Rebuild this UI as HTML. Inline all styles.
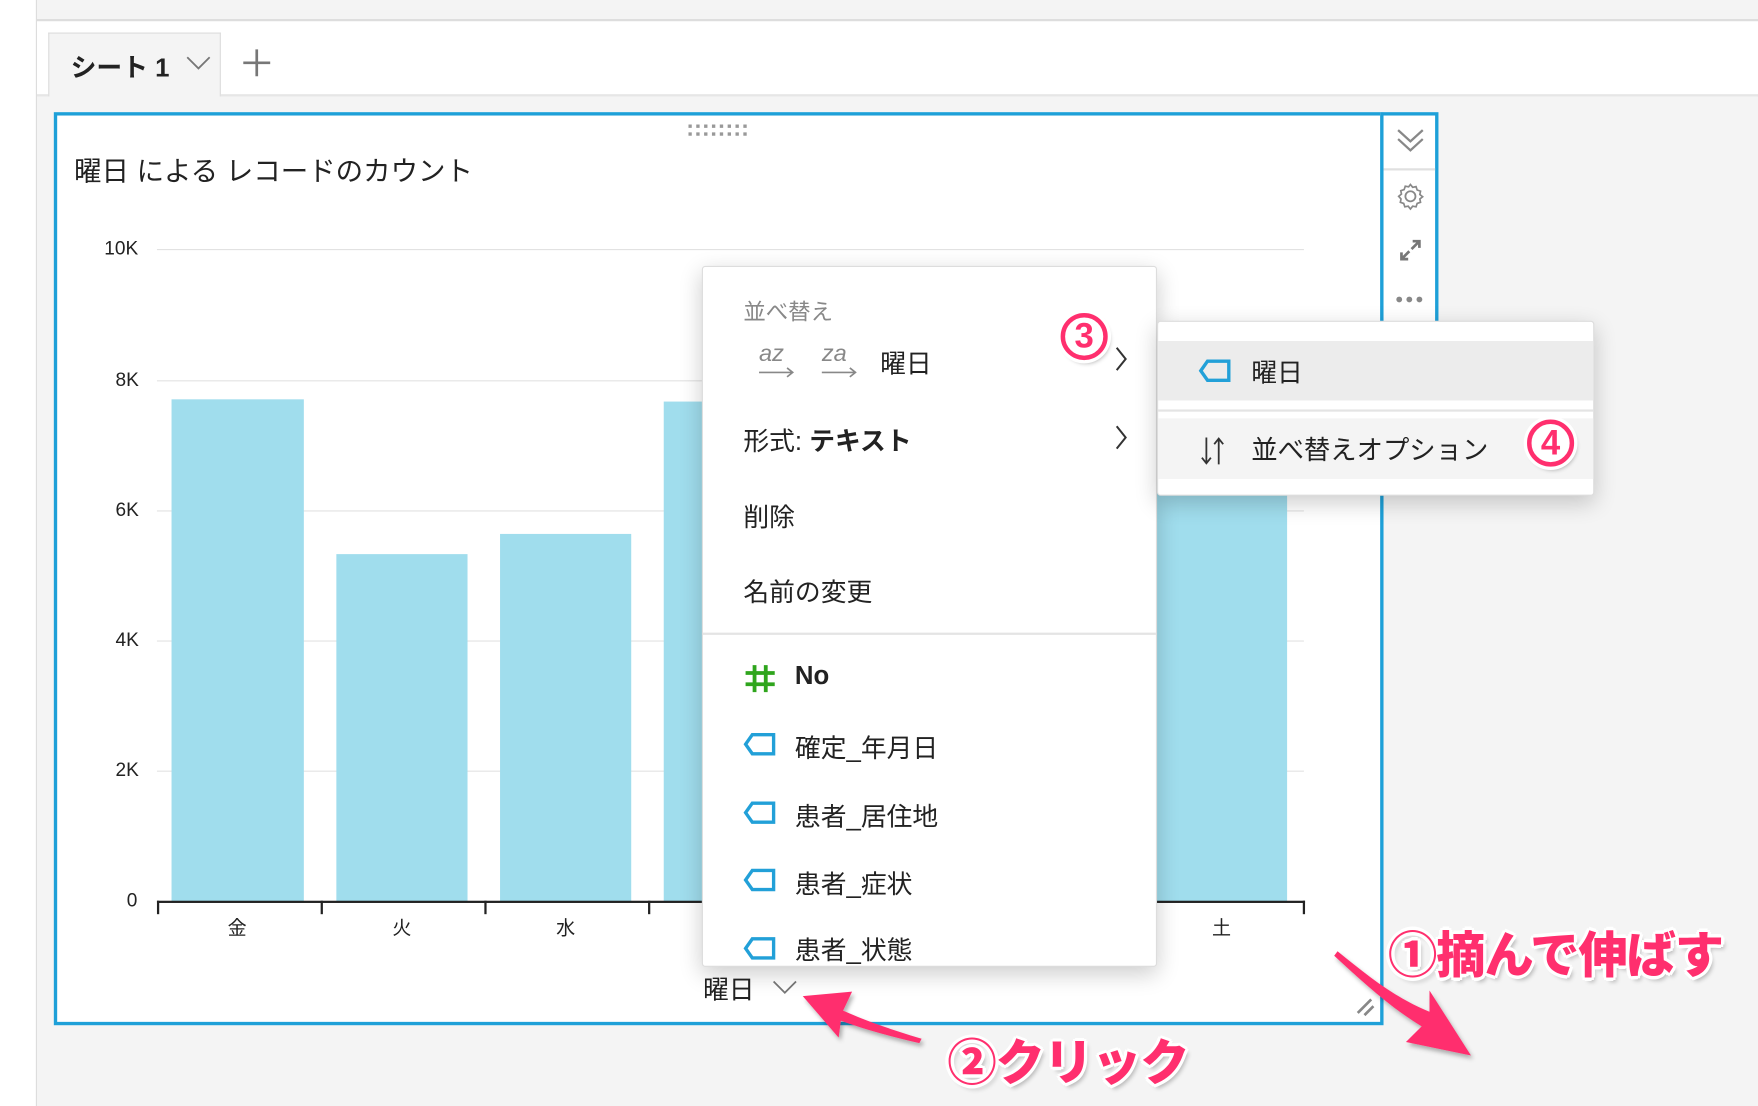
<!DOCTYPE html>
<html><head><meta charset="utf-8"><style>
*{margin:0;padding:0;box-sizing:border-box}
html,body{width:1758px;height:1106px;overflow:hidden;background:#f4f4f4}
#w{position:absolute;left:0;top:0;width:1568px;height:986px;transform:scale(1.12117,1.1217);transform-origin:0 0;font-family:"Liberation Sans","Noto Sans CJK JP",sans-serif;color:#222;background:#f4f4f4}
.a{position:absolute}
.t{position:absolute;white-space:nowrap}
.pk{color:#ff2f6e;font-weight:900;text-shadow:0 0 3px #fff,2px 2px 0 #fff,-2px -2px 0 #fff,2px -2px 0 #fff,-2px 2px 0 #fff,3px 0 0 #fff,-3px 0 0 #fff,0 3px 0 #fff,0 -3px 0 #fff,3px 4px 4px rgba(0,0,0,.25)}
.circ{position:absolute;border-radius:50%;background:#fff;border:4px solid #ff2f6e;box-shadow:0 0 0 3px #fff,2px 3px 4px rgba(0,0,0,.3);color:#ff2f6e;font-weight:900;text-align:center;font-family:"Liberation Sans",sans-serif}
.m{font-size:23px}
</style></head><body><div id="w">
<div class="a" style="left:0;top:0;width:32px;height:986px;background:#fff"></div>
<div class="a" style="left:32px;top:0;width:1px;height:986px;background:#ddd"></div>
<div class="a" style="left:33px;top:17px;width:1535px;height:2px;background:#ddd"></div>
<div class="a" style="left:33px;top:19px;width:1535px;height:65px;background:#fff"></div>
<div class="a" style="left:33px;top:84px;width:1535px;height:2px;background:#e6e6e6"></div>
<div class="a" style="left:43px;top:29px;width:154px;height:57px;background:#f4f4f4;border:1px solid #ddd;border-bottom:none"></div>
<div class="t" style="left:63px;top:41px;font-size:23px;font-weight:bold;color:#222">シート 1</div>
<svg class="a" style="left:165px;top:48px" width="24" height="16"><path d="M2 3 L12 13 L22 3" fill="none" stroke="#777" stroke-width="1.6"/></svg>
<svg class="a" style="left:215px;top:42px" width="28" height="28"><path d="M14 2V26M2 14H26" stroke="#777" stroke-width="2.4"/></svg>

<div class="a" style="left:48px;top:100px;width:1186px;height:814px;background:#fff;border:3px solid #1ea0d8"></div>
<div class="a" style="left:1231px;top:100px;width:52px;height:190px;background:#fff;border:3px solid #1ea0d8"></div>
<div class="a" style="left:1234px;top:150px;width:46px;height:2px;background:#e0e0e0"></div>
<svg class="a" style="left:1244px;top:112px" width="28" height="26"><path d="M3 4 L14 14 L25 4 M3 12 L14 22 L25 12" fill="none" stroke="#888" stroke-width="2"/></svg>
<svg class="a" style="left:1245px;top:162px" width="26" height="26"><circle cx="13" cy="13" r="4.5" fill="none" stroke="#888" stroke-width="1.6"/><path d="M13 2.5l2 2.5 3-.6 1 3 3 1-.6 3 2.5 2-2.5 2 .6 3-3 1-1 3-3-.6-2 2.5-2-2.5-3 .6-1-3-3-1 .6-3L2.5 13 5 11l-.6-3 3-1 1-3 3 .6z" fill="none" stroke="#888" stroke-width="1.5"/></svg>
<svg class="a" style="left:1247px;top:212px" width="22" height="22"><path d="M12 10 L19 3 M13 3H19V9 M10 12 L3 19 M3 13V19H9" fill="none" stroke="#777" stroke-width="2.4"/></svg>
<svg class="a" style="left:1244px;top:262px" width="28" height="10"><circle cx="4" cy="5" r="2.6" fill="#888"/><circle cx="13" cy="5" r="2.6" fill="#888"/><circle cx="22" cy="5" r="2.6" fill="#888"/></svg>
<svg class="a" style="left:614px;top:111px" width="56" height="12"><g fill="#999"><rect x="0" y="0" width="3" height="3"/><rect x="7" y="0" width="3" height="3"/><rect x="14" y="0" width="3" height="3"/><rect x="21" y="0" width="3" height="3"/><rect x="28" y="0" width="3" height="3"/><rect x="35" y="0" width="3" height="3"/><rect x="42" y="0" width="3" height="3"/><rect x="49" y="0" width="3" height="3"/><rect x="0" y="7" width="3" height="3"/><rect x="7" y="7" width="3" height="3"/><rect x="14" y="7" width="3" height="3"/><rect x="21" y="7" width="3" height="3"/><rect x="28" y="7" width="3" height="3"/><rect x="35" y="7" width="3" height="3"/><rect x="42" y="7" width="3" height="3"/><rect x="49" y="7" width="3" height="3"/></g></svg>
<div class="t" style="left:66px;top:134px;font-size:24.5px;color:#222">曜日 による レコードのカウント</div>
<div class="a" style="left:140px;top:222px;width:1023px;height:1px;background:#e2e2e2"></div>
<div class="a" style="left:140px;top:339px;width:1023px;height:1px;background:#e2e2e2"></div>
<div class="a" style="left:140px;top:455px;width:1023px;height:1px;background:#e2e2e2"></div>
<div class="a" style="left:140px;top:571px;width:1023px;height:1px;background:#e2e2e2"></div>
<div class="a" style="left:140px;top:687px;width:1023px;height:1px;background:#e2e2e2"></div>
<div class="t" style="left:93px;top:212px;font-size:17px">10K</div>
<div class="t" style="left:103px;top:329px;font-size:17px">8K</div>
<div class="t" style="left:103px;top:445px;font-size:17px">6K</div>
<div class="t" style="left:103px;top:561px;font-size:17px">4K</div>
<div class="t" style="left:103px;top:677px;font-size:17px">2K</div>
<div class="t" style="left:113px;top:793px;font-size:17px">0</div>
<div class="a" style="left:153px;top:356px;width:118px;height:448px;background:#a0dded"></div>
<div class="a" style="left:300px;top:494px;width:117px;height:310px;background:#a0dded"></div>
<div class="a" style="left:446px;top:476px;width:117px;height:328px;background:#a0dded"></div>
<div class="a" style="left:592px;top:358px;width:40px;height:446px;background:#a0dded"></div>
<div class="a" style="left:1032px;top:430px;width:116px;height:374px;background:#a0dded"></div>
<div class="a" style="left:140px;top:803px;width:1024px;height:2px;background:#222"></div>
<div class="a" style="left:140px;top:803px;width:2px;height:12px;background:#222"></div>
<div class="a" style="left:286px;top:803px;width:2px;height:12px;background:#222"></div>
<div class="a" style="left:432px;top:803px;width:2px;height:12px;background:#222"></div>
<div class="a" style="left:578px;top:803px;width:2px;height:12px;background:#222"></div>
<div class="a" style="left:1162px;top:803px;width:2px;height:12px;background:#222"></div>
<div class="t" style="left:203px;top:813px;font-size:17px">金</div>
<div class="t" style="left:350px;top:813px;font-size:17px">火</div>
<div class="t" style="left:496px;top:813px;font-size:17px">水</div>
<div class="t" style="left:1081px;top:813px;font-size:17px">土</div>
<div class="t" style="left:627px;top:863px;font-size:23px">曜日</div>
<svg class="a" style="left:688px;top:872px" width="24" height="16"><path d="M2 3 L12 13 L22 3" fill="none" stroke="#777" stroke-width="1.6"/></svg>
<svg class="a" style="left:1208px;top:888px" width="20" height="20"><path d="M3 15 L15 3 M9 17 L17 9" stroke="#888" stroke-width="2.4"/></svg>

<div class="a" style="left:626px;top:237px;width:406px;height:625px;background:#fff;border:1px solid #ddd;border-radius:3px;box-shadow:0 6px 20px rgba(0,0,0,.2);overflow:hidden">
<div class="t" style="left:36px;top:24px;font-size:20px;color:#888">並べ替え</div>
<div class="t" style="left:50px;top:66px;font-size:21px;color:#888;font-style:italic">az</div>
<div class="t" style="left:106px;top:66px;font-size:21px;color:#888;font-style:italic">za</div>
<svg class="a" style="left:48px;top:88px" width="100" height="12"><path d="M2 6H32M27 2L32 6L27 10M58 6H88M83 2L88 6L83 10" fill="none" stroke="#888" stroke-width="1.5"/></svg>
<div class="t m" style="left:158px;top:67px">曜日</div>
<svg class="a" style="left:366px;top:70px" width="14" height="24"><path d="M3 2L11 12L3 22" fill="none" stroke="#333" stroke-width="1.8"/></svg>
<div class="t m" style="left:36px;top:136px">形式: <b>テキスト</b></div>
<svg class="a" style="left:366px;top:140px" width="14" height="24"><path d="M3 2L11 12L3 22" fill="none" stroke="#333" stroke-width="1.8"/></svg>
<div class="t m" style="left:36px;top:204px">削除</div>
<div class="t m" style="left:36px;top:271px">名前の変更</div>
<div class="a" style="left:0;top:326px;width:406px;height:2px;background:#e4e4e4"></div>
<svg class="a" style="left:36px;top:353px" width="30" height="28"><path d="M10 2V26M20 2V26M2 9H28M2 19H28" stroke="#2fa51d" stroke-width="3.4"/></svg>
<div class="t m" style="left:82px;top:351px;font-weight:bold">No</div>
<div class="t m" style="left:82px;top:410px">確定_年月日</div>
<div class="t m" style="left:82px;top:471px">患者_居住地</div>
<div class="t m" style="left:82px;top:531px">患者_症状</div>
<div class="t m" style="left:82px;top:590px">患者_状態</div>
<svg class="a" style="left:36px;top:414px" width="30" height="24"><path d="M8 3H27V20H8L2 11.5Z" fill="none" stroke="#22a0d8" stroke-width="3"/></svg>
<svg class="a" style="left:36px;top:475px" width="30" height="24"><path d="M8 3H27V20H8L2 11.5Z" fill="none" stroke="#22a0d8" stroke-width="3"/></svg>
<svg class="a" style="left:36px;top:535px" width="30" height="24"><path d="M8 3H27V20H8L2 11.5Z" fill="none" stroke="#22a0d8" stroke-width="3"/></svg>
<svg class="a" style="left:36px;top:596px" width="30" height="24"><path d="M8 3H27V20H8L2 11.5Z" fill="none" stroke="#22a0d8" stroke-width="3"/></svg>
</div>

<div class="a" style="left:1032px;top:286px;width:390px;height:156px;background:#fff;border:1px solid #ddd;border-radius:3px;box-shadow:0 6px 20px rgba(0,0,0,.2)">
<div class="a" style="left:0;top:17px;width:388px;height:53px;background:#ececec"></div>
<div class="a" style="left:0;top:78px;width:388px;height:2px;background:#e4e4e4"></div>
<div class="a" style="left:0;top:86px;width:388px;height:54px;background:#f4f4f4"></div>
<svg class="a" style="left:36px;top:32px" width="30" height="24"><path d="M8 3H27V20H8L2 11.5Z" fill="none" stroke="#22a0d8" stroke-width="3"/></svg>
<div class="t m" style="left:83px;top:26px">曜日</div>
<svg class="a" style="left:36px;top:100px" width="26" height="30"><path d="M7 3V26M3 21L7 26L11 21M18 27V4M14 9L18 4L22 9" fill="none" stroke="#333" stroke-width="1.6"/></svg>
<div class="t" style="left:83px;top:95px;font-size:23.5px">並べ替えオプション</div>
</div>

<div class="circ" style="left:946px;top:279px;width:42px;height:42px;font-size:31px;line-height:34px">3</div>
<div class="circ" style="left:1362px;top:374px;width:42px;height:42px;font-size:31px;line-height:34px">4</div>
<div class="t pk" style="left:1238px;top:816px;font-size:44px;letter-spacing:-1px">①摘んで伸ばす</div>
<div class="t pk" style="left:845px;top:912px;font-size:44px;letter-spacing:-1px">②クリック</div>
<svg class="a" style="left:0;top:0" width="1568" height="986">
<defs><filter id="s"><feDropShadow dx="2" dy="3" stdDeviation="2" flood-opacity=".3"/></filter></defs>
<g filter="url(#s)" fill="#ff2f6e">
<path d="M1190 852 L1193 848 C1220 870 1245 890 1275 902 L1275 883 L1312 941 L1254 929 L1268 915 C1240 898 1215 875 1190 852Z"/>
<path d="M820 930 L822 926 C795 918 772 910 752 901 L760 884 L716 888 L748 925 L750 910 C772 918 798 925 820 930Z"/>
</g></svg>
</div></body></html>
